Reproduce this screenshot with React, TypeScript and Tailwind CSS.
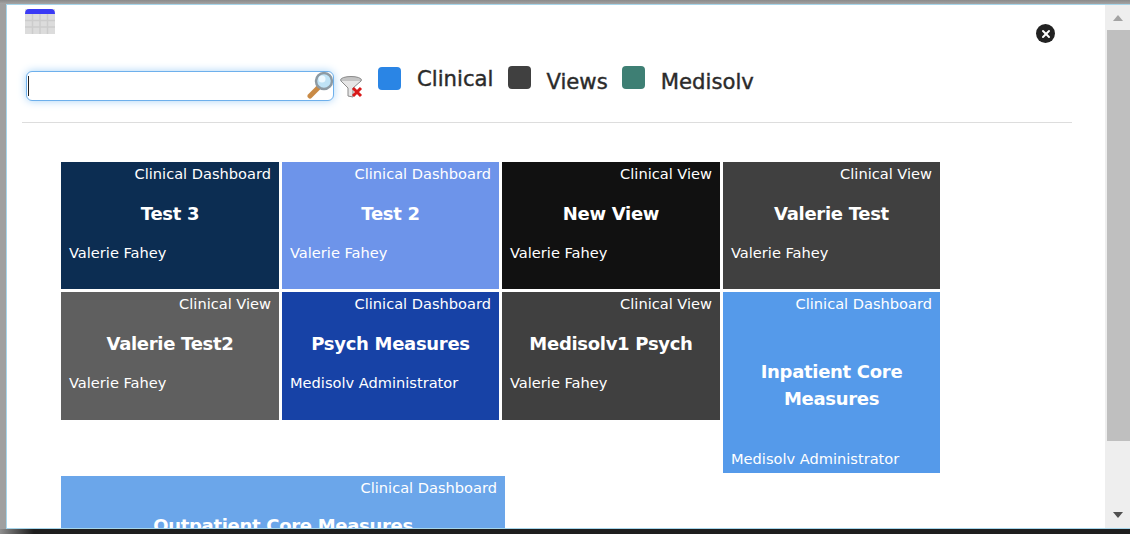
import { X } from 'lucide-react';

interface TileProps {
  kind: string;
  title: string;
  owner: string;
  bg: string;
  size: string;
  ownerClass?: string;
}

function Tile({ kind, title, owner, bg, size, ownerClass = 'pb-[27px]' }: TileProps) {
  return (
    <div className={`shrink-0 flex flex-col text-white ${bg} ${size}`}>
      <div className="h-[25px] pt-[3px] pr-[8px] text-right text-[14.6px] leading-[18px]">{kind}</div>
      <div className="pt-[13px] text-center text-[18px] tracking-[-0.3px] font-bold leading-[27px]">{title}</div>
      <div className={`mt-auto pl-[8px] text-[14.6px] leading-[18px] ${ownerClass}`}>{owner}</div>
    </div>
  );
}

function Legend({ color, label, labelClass }: { color: string; label: string; labelClass: string }) {
  return (
    <div className="flex items-start">
      <div className={`w-[23px] h-[23px] rounded-[4px] ${color}`} />
      <span className={`text-[#2b2b2b] text-[21.2px] leading-[24px] [-webkit-text-stroke:0.4px_#2b2b2b] ${labelClass}`}>{label}</span>
    </div>
  );
}

export default function App() {
  return (
    <div className="w-[1130px] h-[534px] overflow-hidden bg-[#1e1e1e] flex flex-col font-['DejaVu_Sans',sans-serif]">
      <div className="h-[4px] shrink-0 bg-gradient-to-b from-[#8a8a8a] to-[#a5a5a5]" />
      <div className="h-[525px] flex shrink-0">
        <div className="w-[6px] shrink-0 bg-[#a0a0a0]" />
        <div className="flex-1 flex border-t border-b border-l border-[#a6d5ea] bg-white min-w-0">
          {/* Main scroll content */}
          <div className="relative flex-1 min-w-0 overflow-hidden">
            <div className="h-[50px] pl-[18px] pt-[4px]">
              <svg width="30" height="26" viewBox="0 0 30 26">
                <rect width="30" height="25" y="0" fill="#dcdcdc" />
                <path d="M0 5 Q0 0 4 0 H26 Q30 0 30 5 Z" fill="#3a3af5" />
                <path d="M0 11.5H30M0 18H30M7.5 5V25M15 5V25M22.5 5V25" stroke="#cccccc" strokeWidth="1.5" />
              </svg>
            </div>

            <div className="absolute left-[1029px] top-[19px] w-[19px] h-[19px] rounded-full bg-[#222222] flex items-center justify-center">
              <X size={12} strokeWidth={4} className="text-white" />
            </div>

            <div className="flex items-start ml-[15px] pl-[4px] pt-[12px] h-[68px] w-[1050px] border-b border-[#dddddd]">
              <div className="relative w-[308px] h-[30px] mt-[4px] rounded-[6px] border border-[#6eb0ec] shadow-[0_0_8px_#a9d4f7] bg-white shrink-0">
                <div className="absolute left-[1px] top-[4px] w-px h-[20px] bg-[#222222]" />
                <svg className="absolute -right-[2px] -top-[1px]" width="28" height="28" viewBox="0 0 28 28">
                  <path d="M3 25 L11 17" stroke="#c98a45" strokeWidth="5" strokeLinecap="round" />
                  <circle cx="17" cy="10" r="8" fill="#bfe3f6" stroke="#8d9aa3" strokeWidth="2.5" />
                  <circle cx="15" cy="8" r="3.5" fill="#eef9ff" />
                </svg>
              </div>
              <svg className="mt-[9px] ml-[6px] shrink-0" width="24" height="22" viewBox="0 0 24 22">
                <ellipse cx="11" cy="4" rx="10.5" ry="3.5" fill="#c4c4c4" stroke="#8a8a8a" />
                <path d="M1 5 L8 12 V20 L13 21 V12 L21 5" fill="#e6e6e6" stroke="#8a8a8a" />
                <path d="M13 12 L21 20 M21 12 L13 20" stroke="#d81a1a" strokeWidth="3" />
              </svg>
              <div className="ml-[14px] flex items-start">
                <Legend color="bg-[#2a85e5]" label="Clinical" labelClass="ml-[16px] mt-0" />
                <div className="ml-[15px] -mt-px">
                  <Legend color="bg-[#404040]" label="Views" labelClass="ml-[15px] mt-[4px]" />
                </div>
                <div className="ml-[14px] -mt-px">
                  <Legend color="bg-[#3e7f74]" label="Medisolv" labelClass="ml-[16px] mt-[4px]" />
                </div>
              </div>
            </div>

            <div className="pl-[54px] pt-[39px] flex flex-col gap-[3px]">
              <div className="flex gap-[3px]">
                <Tile kind="Clinical Dashboard" title="Test 3" owner="Valerie Fahey" bg="bg-[#0c2d52]" size="w-[218px] h-[127px]" />
                <Tile kind="Clinical Dashboard" title="Test 2" owner="Valerie Fahey" bg="bg-[#6d94ea]" size="w-[217px] h-[127px]" />
                <Tile kind="Clinical View" title="New View" owner="Valerie Fahey" bg="bg-[#111111]" size="w-[218px] h-[127px]" />
                <Tile kind="Clinical View" title="Valerie Test" owner="Valerie Fahey" bg="bg-[#404040]" size="w-[217px] h-[127px]" />
              </div>
              <div className="flex gap-[3px] items-start">
                <Tile kind="Clinical View" title="Valerie Test2" owner="Valerie Fahey" bg="bg-[#5f5f5f]" size="w-[218px] h-[128px]" ownerClass="pb-[28px]" />
                <Tile kind="Clinical Dashboard" title="Psych Measures" owner="Medisolv Administrator" bg="bg-[#1742a6]" size="w-[217px] h-[128px]" ownerClass="pb-[28px]" />
                <Tile kind="Clinical View" title="Medisolv1 Psych" owner="Valerie Fahey" bg="bg-[#404040]" size="w-[218px] h-[128px]" ownerClass="pb-[28px]" />
                <div className="shrink-0 w-[217px] h-[181px] flex flex-col text-white bg-[#559aea]">
                  <div className="h-[25px] pt-[3px] pr-[8px] text-right text-[14.6px] leading-[18px]">Clinical Dashboard</div>
                  <div className="pt-[41px] text-center text-[18px] tracking-[-0.3px] font-bold leading-[27px]">Inpatient Core<br />Measures</div>
                  <div className="mt-auto pl-[8px] pb-[5px] text-[14.6px] leading-[18px]">Medisolv Administrator</div>
                </div>
              </div>
              <div className="w-[444px] h-[130px] text-white bg-[#6ba6ea] shrink-0">
                <div className="h-[25px] pt-[3px] pr-[8px] text-right text-[14.6px] leading-[18px]">Clinical Dashboard</div>
                <div className="pt-[11px] text-center text-[18px] tracking-[-0.3px] font-bold leading-[27px]">Outpatient Core Measures</div>
              </div>
            </div>
          </div>

          {/* Scrollbar */}
          <div className="w-[25px] shrink-0 bg-[#eeeeee] flex flex-col items-end">
            <div className="h-[25px] w-full flex items-center justify-center">
              <div className="w-0 h-0 border-l-[5.5px] border-r-[5.5px] border-b-[6px] border-l-transparent border-r-transparent border-b-[#a3a3a3]" />
            </div>
            <div className="w-[23px] h-[411px] bg-[#bfbfbf]" />
            <div className="mt-auto h-[26px] w-full flex items-center justify-center">
              <div className="w-0 h-0 border-l-[5.5px] border-r-[5.5px] border-t-[6px] border-l-transparent border-r-transparent border-t-[#505050]" />
            </div>
          </div>
        </div>
      </div>
      <div className="flex-1 bg-gradient-to-r from-[#8f8f8f] to-[#1e1e1e] to-[3%]" />
    </div>
  );
}
